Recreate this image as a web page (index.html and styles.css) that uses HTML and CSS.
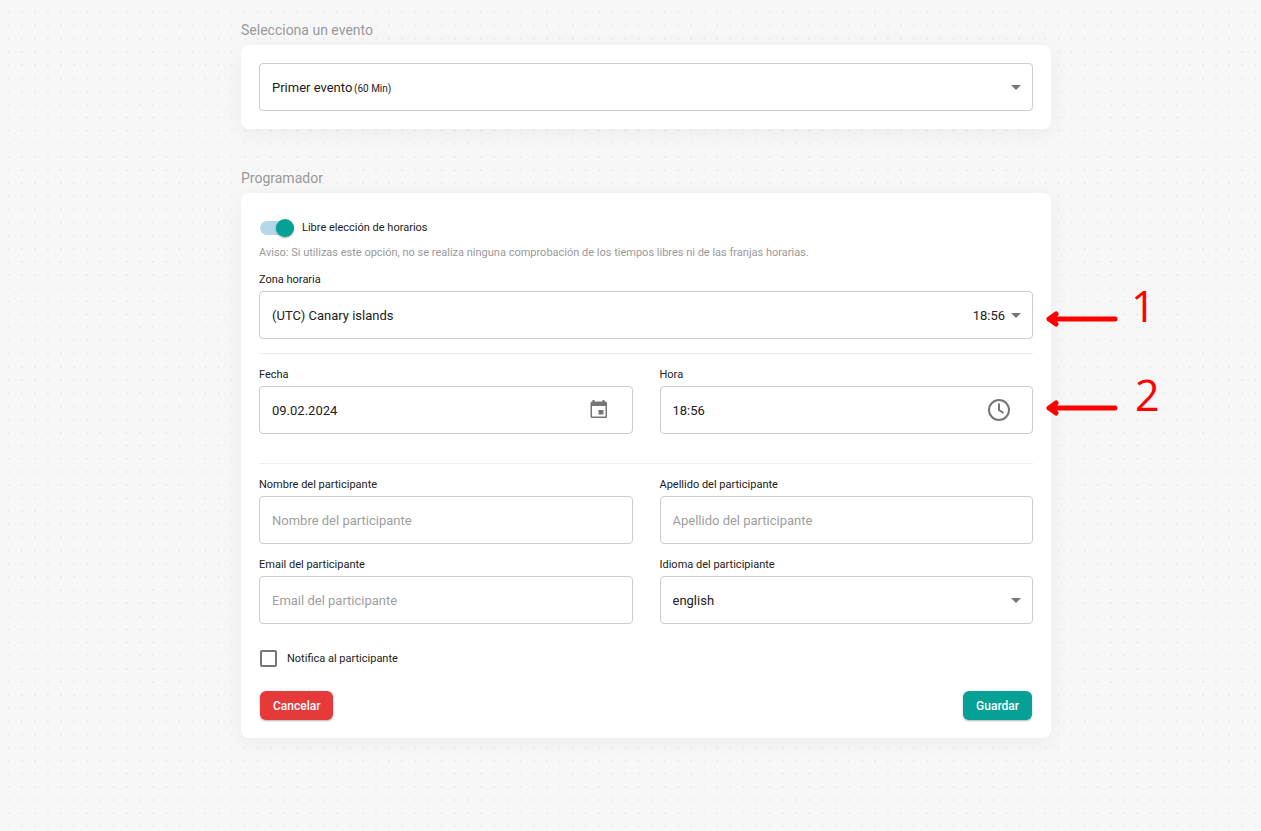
FILE: index.html
```html
<!DOCTYPE html>
<html lang="es">
<head>
<meta charset="utf-8">
<meta name="viewport" content="width=device-width, initial-scale=1">
<title>Programador</title>
<link rel="stylesheet" href="styles.css">
</head>
<body>
<main class="page">
  <section>
    <h2 class="section-title" id="event-title">Selecciona un evento</h2>
    <div class="card">
      <div class="control">
        <select class="input select" aria-labelledby="event-title"><option>Primer evento</option></select>
        <span class="duration">(60 Min)</span>
        <svg class="caret" viewBox="0 0 10 5" aria-hidden="true"><path d="M0 0h10L5 5z"/></svg>
      </div>
    </div>
  </section>

  <section>
    <h2 class="section-title">Programador</h2>
    <form class="card">
      <label class="toggle"><input class="switch" type="checkbox" role="switch" checked>Libre elección de horarios</label>
      <p class="notice">Aviso: Si utilizas este opción, no se realiza ninguna comprobación de los tiempos libres ni de las franjas horarias.</p>

      <div class="field">
        <label class="label" for="zone">Zona horaria</label>
        <div class="control">
          <select class="input select" id="zone"><option>(UTC) Canary islands</option></select>
          <span class="zone-time">18:56</span>
          <svg class="caret" viewBox="0 0 10 5" aria-hidden="true"><path d="M0 0h10L5 5z"/></svg>
          <div class="callout">
            <svg class="arrow" viewBox="0 0 74 16" aria-hidden="true"><path d="M70 8H4M11 3L4 8l7 5"/></svg>
            <span class="number">1</span>
          </div>
        </div>
      </div>

      <div class="row row-divided row-time">
        <div class="field">
          <label class="label" for="date">Fecha</label>
          <div class="control">
            <input class="input" id="date" type="text" value="09.02.2024">
            <svg class="icon" viewBox="0 0 24 24" aria-hidden="true"><path fill-rule="evenodd" d="M5.500 3.500V2h2v1.500h8V2h2v1.500h1A1.500 1.500 0 0 1 20 5v13.500a1.500 1.500 0 0 1-1.500 1.500h-13.500A1.500 1.500 0 0 1 3.500 18.500V5A1.500 1.500 0 0 1 5 3.500zM5 8v10.500h13.500V8zM11.500 12h5v4.500h-5z"/></svg>
          </div>
        </div>
        <div class="field">
          <label class="label" for="time">Hora</label>
          <div class="control">
            <input class="input" id="time" type="text" value="18:56">
            <svg class="icon icon-line" viewBox="0 0 24 24" aria-hidden="true"><circle cx="12" cy="12" r="10"/><path d="M12 5.500V12l4.500 3"/></svg>
            <div class="callout callout-raised">
              <svg class="arrow" viewBox="0 0 74 16" aria-hidden="true"><path d="M70 8H4M11 3L4 8l7 5"/></svg>
              <span class="number">2</span>
            </div>
          </div>
        </div>
      </div>

      <div class="row row-divided">
        <div class="field">
          <label class="label" for="name">Nombre del participante</label>
          <div class="control"><input class="input" id="name" type="text" placeholder="Nombre del participante"></div>
        </div>
        <div class="field">
          <label class="label" for="surname">Apellido del participante</label>
          <div class="control"><input class="input" id="surname" type="text" placeholder="Apellido del participante"></div>
        </div>
        <div class="field">
          <label class="label" for="email">Email del participante</label>
          <div class="control"><input class="input" id="email" type="email" placeholder="Email del participante"></div>
        </div>
        <div class="field">
          <label class="label" for="language">Idioma del participiante</label>
          <div class="control">
            <select class="input select" id="language"><option>english</option></select>
            <svg class="caret" viewBox="0 0 10 5" aria-hidden="true"><path d="M0 0h10L5 5z"/></svg>
          </div>
        </div>
      </div>

      <label class="notify"><input class="checkbox" type="checkbox">Notifica al participante</label>

      <div class="actions">
        <button class="button button-cancel" type="button">Cancelar</button>
        <button class="button button-save" type="submit">Guardar</button>
      </div>
    </form>
  </section>
</main>
</body>
</html>
```

FILE: styles.css
```css
* {
  box-sizing: border-box;
}

body {
  margin: 0;
  min-height: 100vh;
  background-color: #f7f7f7;
  background-image: radial-gradient(circle, #ebebeb 1px, transparent 1px);
  background-size: calc(100vw / 96) calc(100vw / 96);
  background-position: 2px 6px;
  color: #212121;
  font: 11px/16px Roboto, "Liberation Sans", sans-serif;
}

.page {
  max-width: 841px;
  margin: 0 auto;
  padding: 20px 0 32px 31px;
  display: grid;
  gap: 39px;
}

.section-title {
  margin: 0 0 5px;
  color: #999;
  font-size: 14px;
  font-weight: 400;
  line-height: 20px;
}

.card {
  padding: 18px;
  border-radius: 8px;
  background: #fff;
  box-shadow: 0 4px 20px rgba(0, 0, 0, 0.05);
}

.toggle,
.notify {
  display: flex;
  align-items: center;
}

.toggle {
  gap: 7px;
  height: 34px;
}

.switch {
  position: relative;
  appearance: none;
  width: 34px;
  height: 14px;
  margin: 0 1px;
  border-radius: 7px;
  background: #b3d8e8;
}

.switch::after {
  content: "";
  position: absolute;
  top: -2px;
  right: 0;
  width: 18px;
  height: 18px;
  border-radius: 50%;
  background: #05a196;
  box-shadow: 0 1px 2px rgba(0, 0, 0, 0.35);
}

.notice {
  margin: 0 0 11px;
  color: #999;
}

.label {
  display: block;
  margin-bottom: 3px;
}

.control {
  position: relative;
}

.input {
  appearance: none;
  display: block;
  width: 100%;
  height: 48px;
  padding: 0 12px;
  border: 1px solid #ccc;
  border-radius: 4px;
  background: #fff;
  color: #212121;
  font: 13px/20px Roboto, "Liberation Sans", sans-serif;
}

.select {
  padding-top: 2px;
}

.input::placeholder {
  color: #9e9e9e;
  opacity: 1;
}

.duration,
.zone-time,
.caret,
.icon,
.callout {
  position: absolute;
  pointer-events: none;
}

.duration {
  top: 18px;
  left: 95px;
  font-size: 10px;
}

.zone-time {
  top: 15px;
  right: 28px;
  font-size: 13px;
  line-height: 20px;
}

.caret {
  top: 22px;
  right: 12px;
  width: 10px;
  height: 5px;
  fill: #757575;
}

.icon {
  top: 12px;
  right: 22px;
  width: 24px;
  height: 24px;
  fill: #757575;
}

.icon-line {
  fill: none;
  stroke: #757575;
  stroke-width: 2;
}

.callout {
  top: 0;
  left: 100%;
  display: flex;
  padding-left: 12px;
  gap: 12px;
}

.callout-raised {
  top: -6px;
  gap: 16px;
}

.arrow {
  flex: none;
  width: 74px;
  height: 16px;
  margin-top: 20px;
  fill: none;
  stroke: #f00;
  stroke-width: 5;
  stroke-linecap: round;
  stroke-linejoin: round;
}

.number {
  margin-top: -8px;
  color: #f00;
  font: 43px/46px "Open Sans", "Noto Sans", sans-serif;
}

.row {
  display: grid;
  grid-template-columns: 1fr 1fr;
  gap: 13px 27px;
}

.row-divided {
  margin-top: 14px;
  padding-top: 13px;
  border-top: 1px solid #eee;
}

.row-time {
  margin-bottom: 29px;
}

.notify {
  gap: 10px;
  margin-top: 26px;
}

.checkbox {
  appearance: none;
  width: 17px;
  height: 17px;
  margin: 0 0 0 1px;
  border: 2px solid #757575;
  border-radius: 2px;
}

.actions {
  display: flex;
  justify-content: space-between;
  margin: 24px 1px 0;
}

.button {
  height: 29px;
  padding: 0 13px;
  border: 0;
  border-radius: 6px;
  box-shadow: 0 1px 2px rgba(0, 0, 0, 0.3);
  color: #fff;
  font: 500 12px/16px Roboto, "Liberation Sans", sans-serif;
}

.button-cancel {
  background: #e63a3a;
}

.button-save {
  background: #05a196;
}
```
